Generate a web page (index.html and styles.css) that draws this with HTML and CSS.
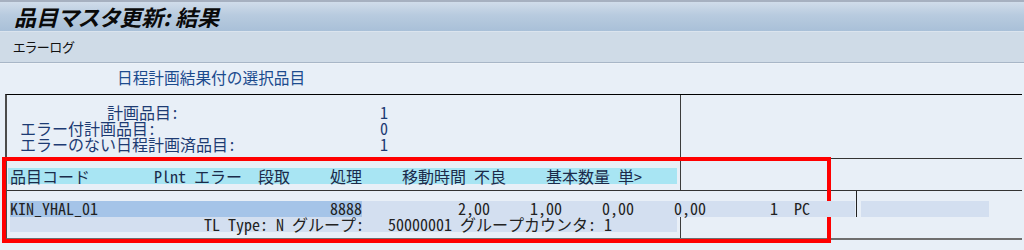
FILE: index.html
```html
<!DOCTYPE html>
<html lang="ja">
<head>
  <meta charset="UTF-8">
  <title>品目マスタ更新: 結果</title>
  <link rel="stylesheet" href="styles.css">
</head>
<body>
  <div class="titlebar"><h1>品目マスタ更新: 結果</h1></div>
  <div class="toolbar">エラーログ</div>

  <div class="heading">日程計画結果付の選択品目</div>

  <div class="box">
    <div class="split summary">
      <div class="cell">
        <div class="stat"><span class="lbl indent">計画品目:</span><span>1</span></div>
        <div class="stat"><span class="lbl">エラー付計画品目:</span><span>0</span></div>
        <div class="stat"><span class="lbl">エラーのない日程計画済品目:</span><span>1</span></div>
      </div>
      <div class="cell"></div>
    </div>

    <div class="split header">
      <div class="cell">
        <div class="colhead mono">
          <span class="w144">品目コード</span><span class="w40">Plnt</span><span class="w64">エラー</span><span class="w72">段取</span><span class="w72">処理</span><span class="w72">移動時間</span><span class="w72">不良</span><span class="w72">基本数量</span><span>単&gt;</span>
        </div>
      </div>
      <div class="cell"></div>
    </div>

    <div class="row1 mono">
      <div class="hl"><span>KIN_YHAL_01</span><span>8888</span></div>
      <div class="lt"><span class="num w128">2,00</span><span class="num w72">1,00</span><span class="num w72">0,00</span><span class="num w72">0,00</span><span class="num w72">1</span><span>  PC</span></div>
      <div class="vsep"></div>
      <div class="gray"></div>
    </div>

    <div class="split detail">
      <div class="cell">
        <div class="lt2 mono">TL Type: N グループ:   50000001 グループカウンタ: 1</div>
      </div>
      <div class="cell"></div>
    </div>
  </div>

  <div class="redbox"></div>
</body>
</html>
```

FILE: styles.css
```css
body { margin: 0; background: #e8eff7; font-family: "Noto Sans CJK JP", sans-serif; color: #1d3b73; }

.titlebar { height: 29px; border-top: 2px solid #a6b0c0; border-bottom: 1px solid #dbe4ee; background: linear-gradient(#d0dcea, #b8cbdf 45%, #a9c0d8); padding-left: 14px; }
.titlebar h1 { margin: 0; font-size: 22px; font-style: italic; font-weight: bold; line-height: 28px; color: #0a0a0a; font-feature-settings: "palt"; }
.toolbar { height: 30px; line-height: 29px; background: #cfdbe7; border-bottom: 1px solid #a8b6c7; box-shadow: 0 1px 0 #eef3f8; padding-left: 13px; font-size: 13px; color: #111; font-feature-settings: "palt"; }

.heading { margin: 7px 0 0 117px; font-size: 15.7px; line-height: 16px; color: #1c4b8e; }

.mono { font-family: "Noto Sans Mono CJK JP", "Noto Sans CJK JP", monospace; font-size: 16px; line-height: 16px; white-space: pre; }

.box { margin: 8px 0 0 5px; width: 1017px; box-sizing: border-box; border-top: 1px solid #000; border-left: 2px solid #4b4b4b; border-bottom: 2px solid #6e6e6e; }
.split { display: grid; grid-template-columns: 674px 1fr; }
.split > .cell:first-child { border-right: 1px solid #3c3c3c; }

.summary { height: 63px; border-bottom: 1px solid #333; }
.summary .cell:first-child { padding-top: 9px; }
.stat { display: flex; height: 16px; line-height: 16px; font-family: "Noto Sans Mono CJK JP", "Noto Sans CJK JP", sans-serif; font-size: 16px; color: #1d3b73; }
.stat .lbl { width: 373px; box-sizing: border-box; padding-left: 13px; }
.stat .lbl.indent { padding-left: 100px; }

.header { height: 31px; border-bottom: 1px solid #333; }
.colhead { display: flex; margin: 9px 3px 0 1px; height: 16px; padding-left: 2px; background: #a8e5f3; color: #1b2b4a; }

.w40 { width: 40px; }
.w64 { width: 64px; }
.w72 { width: 72px; }
.w128 { width: 128px; }
.w144 { width: 144px; }
.colhead span, .lt span { flex: none; }
.num { text-align: right; }

.row1 { position: relative; z-index: 1; display: flex; height: 26px; color: #222; line-height: 14px; }
.row1 .hl { display: flex; justify-content: space-between; margin: 10px 0 0 3px; width: 352px; height: 16px; background: #a5c4e8; }
.row1 .lt { display: flex; margin-top: 10px; width: 493px; height: 16px; background: #d3dff0; }
.row1 .vsep { width: 1px; margin-left: 1px; background: #222; }
.row1 .gray { margin: 10px 0 0 4px; width: 128px; height: 16px; background: #d3dff0; }

.detail { height: 21px; }
.lt2 { margin: 0 3px; height: 15px; padding-left: 194px; background: #d3dff0; color: #222; line-height: 14px; }

.redbox { position: absolute; left: 2px; top: 157px; width: 829px; height: 86px; box-sizing: border-box; border: 4px solid #ff0000; }
```
